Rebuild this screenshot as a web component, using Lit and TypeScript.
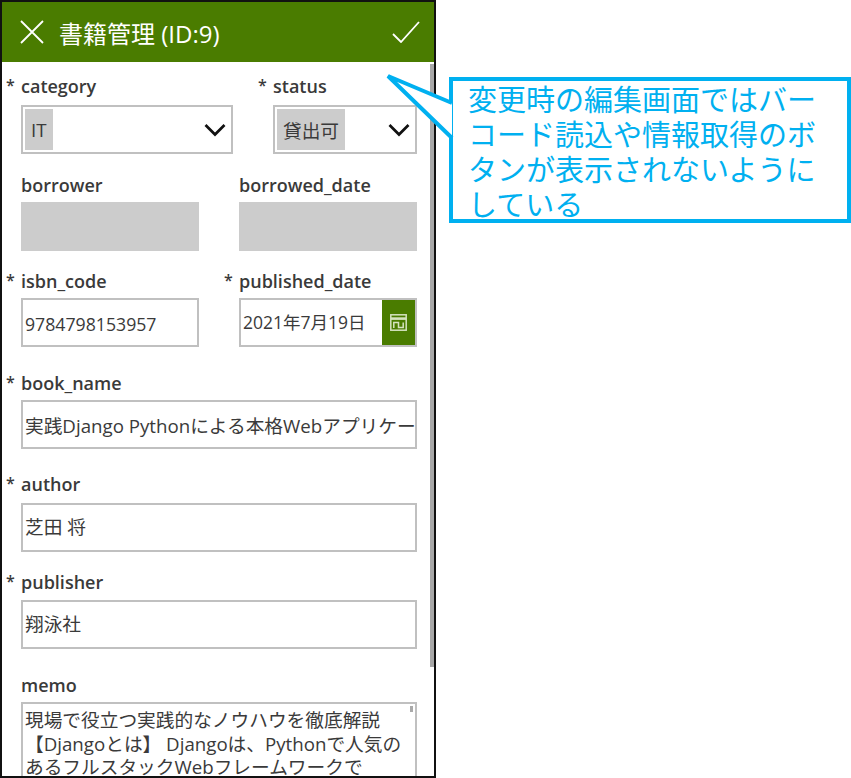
import {LitElement, css, html} from 'lit';
import {customElement} from 'lit/decorators.js';

const chevron = html`<svg class="chev" viewBox="0 0 22 14"><path d="M1.5 2 L11 11.5 L20.5 2" fill="none" stroke="#111" stroke-width="2.7"/></svg>`;

@customElement('app-root')
export class AppRoot extends LitElement {
  static override styles = css`
    :host {
      display: block;
      position: relative;
      width: 851px;
      height: 778px;
      overflow: hidden;
      background: #fff;
      font-family: "Open Sans", "Noto Sans CJK JP", sans-serif;
      color: #3a3a3a;
    }
    .frame {
      width: 436px;
      height: 778px;
      box-sizing: border-box;
      border: 2px solid #111;
      overflow: hidden;
      position: relative;
    }
    .header {
      height: 60px;
      background: #4a7c00;
      display: flex;
      align-items: center;
      color: #fff;
      padding: 0 14px 0 18px;
    }
    .header h1 {
      margin: 0 0 0 15px;
      flex: 1;
      font-size: 24px;
      font-weight: 400;
    }
    .form {
      padding: 15px 17px 0 19px;
    }
    .row {
      display: grid;
    }
    .row.one { grid-template-columns: 212px 144px; column-gap: 40px; }
    .row.two { grid-template-columns: 178px 178px; column-gap: 40px; }
    .row:nth-child(2), .row:nth-child(6) { margin-top: 20px; }
    .row:nth-child(3) { margin-top: 19px; }
    .row:nth-child(4), .row:nth-child(7) { margin-top: 25px; }
    .row:nth-child(5) { margin-top: 26px; }
    .label {
      height: 28px;
      line-height: 22px;
      font-size: 18px;
      font-weight: 600;
      white-space: nowrap;
    }
    .row:nth-child(1) .label, .row:nth-child(5) .label { line-height: 16px; }
    .row:nth-child(6) .label { line-height: 18px; }
    .row:nth-child(3) .label, .row:nth-child(4) .label { line-height: 20px; }
    .star {
      display: inline-block;
      width: 15px;
      margin-left: -15px;
      font-size: 16px;
      vertical-align: 2px;
    }
    .box {
      height: 49px;
      box-sizing: border-box;
      border: 2px solid #c0c0c0;
      display: flex;
      align-items: center;
      font-size: 18.7px;
      padding: 0 2px;
      white-space: nowrap;
      overflow: hidden;
      background: #fff;
    }
    .box.num {
      font-size: 17.7px;
      padding-top: 3px;
    }
    .row:nth-child(5) .box { padding-bottom: 5px; }
    .row:nth-child(6) .box { padding-bottom: 4px; }
    .box.select {
      padding: 2px 5px 2px 2px;
      justify-content: space-between;
      align-items: stretch;
    }
    .pill {
      background: #cccccc;
      padding: 0 6px;
      display: flex;
      align-items: center;
    }
    .chev {
      width: 22px;
      height: 14px;
      align-self: center;
    }
    .box.off {
      background: #cccccc;
      border-color: #cccccc;
    }
    .box.date {
      font-size: 17.5px;
      padding: 0 0 0 2px;
      justify-content: space-between;
      align-items: stretch;
    }
    .date span { align-self: center; margin-top: -3px; }
    .cal {
      width: 33px;
      background: #4a7c00;
      display: flex;
      align-items: center;
      justify-content: center;
    }
    .box.memo {
      height: 110px;
      align-items: flex-start;
      white-space: normal;
      padding: 4px 2px 0;
      line-height: 23.5px;
      position: relative;
    }
    .thumb {
      position: absolute;
      right: 2px;
      top: 2px;
      width: 3px;
      height: 6px;
      background: #aaa;
    }
    .scroll {
      position: absolute;
      left: 428px;
      top: 62px;
      width: 4px;
      height: 603px;
      background: #a8a8a8;
    }
    .note {
      position: absolute;
      left: 449px;
      top: 77px;
      width: 402px;
      height: 146px;
      box-sizing: border-box;
      border: 4px solid #00b0f0;
      padding: 0 0 0 15px;
      color: #00b0f0;
      font-family: "Noto Sans CJK JP", sans-serif;
      font-size: 29px;
      line-height: 35px;
      white-space: nowrap;
      overflow: hidden;
    }
    .tail {
      position: absolute;
      left: 380px;
      top: 70px;
      width: 80px;
      height: 80px;
    }
  `;

  override render() {
    return html`
      <div class="frame">
        <div class="header">
          <svg width="24" height="24" viewBox="0 0 24 24"><path d="M1 1 L23 23 M23 1 L1 23" fill="none" stroke="#fff" stroke-width="1.8"/></svg>
          <h1>書籍管理 (ID:9)</h1>
          <svg width="28" height="22" viewBox="0 0 28 22"><path d="M1 13 L9 21 L27 1" fill="none" stroke="#fff" stroke-width="1.8"/></svg>
        </div>
        <div class="form">
          <div class="row one">
            <div>
              <div class="label"><span class="star">*</span>category</div>
              <div class="box select"><span class="pill">IT</span>${chevron}</div>
            </div>
            <div>
              <div class="label"><span class="star">*</span>status</div>
              <div class="box select"><span class="pill">貸出可</span>${chevron}</div>
            </div>
          </div>
          <div class="row two">
            <div>
              <div class="label">borrower</div>
              <div class="box off"></div>
            </div>
            <div>
              <div class="label">borrowed_date</div>
              <div class="box off"></div>
            </div>
          </div>
          <div class="row two">
            <div>
              <div class="label"><span class="star">*</span>isbn_code</div>
              <div class="box num">9784798153957</div>
            </div>
            <div>
              <div class="label"><span class="star">*</span>published_date</div>
              <div class="box date">
                <span>2021年7月19日</span>
                <div class="cal">
                  <svg width="17" height="17" viewBox="0 0 17 17" fill="none" stroke="#d5e3bf" stroke-width="1.5"><rect x="0.8" y="0.8" width="15.4" height="15.4"/><path d="M1 4.6 H16" stroke-width="2.6"/><path d="M3.8 14 V8.4 H8.5 V13.6 H13.2 V8.4"/></svg>
                </div>
              </div>
            </div>
          </div>
          <div class="row">
            <div class="label"><span class="star">*</span>book_name</div>
            <div class="box">実践Django Pythonによる本格Webアプリケー</div>
          </div>
          <div class="row">
            <div class="label"><span class="star">*</span>author</div>
            <div class="box">芝田 将</div>
          </div>
          <div class="row">
            <div class="label"><span class="star">*</span>publisher</div>
            <div class="box">翔泳社</div>
          </div>
          <div class="row">
            <div class="label">memo</div>
            <div class="box memo">
              <div>現場で役立つ実践的なノウハウを徹底解説<br />【Djangoとは】 Djangoは、Pythonで人気の<br />あるフルスタックWebフレームワークで</div>
              <span class="thumb"></span>
            </div>
          </div>
        </div>
        <div class="scroll"></div>
      </div>
      <div class="note">変更時の編集画面ではバー<br />コード読込や情報取得のボ<br />タンが表示されないように<br />している</div>
      <svg class="tail" viewBox="0 0 80 80">
        <path d="M72 33 L8 6 L72 68" fill="#fff" stroke="none"/>
        <path d="M72 33 L8 6 L72 68" fill="none" stroke="#00b0f0" stroke-width="4"/>
      </svg>
    `;
  }
}

declare global {
  interface HTMLElementTagNameMap {
    'app-root': AppRoot;
  }
}
